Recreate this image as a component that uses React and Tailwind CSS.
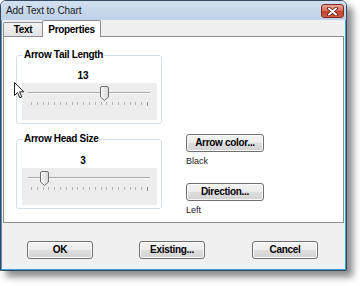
const btn =
  "flex items-center justify-center rounded-[3px] border border-[#707070] bg-[linear-gradient(#f4f4f4_0%,#ececec_50%,#dedede_50%,#d2d2d2_100%)] shadow-[inset_0_0_0_1px_#fbfbfb] text-[10px] font-bold tracking-[-0.3px] leading-none text-black";

const Slider = ({ thumbX }) => {
  const ticks = [];
  for (let i = 0; i <= 20; i++) ticks.push(9 + i * 5.8);

  return (
    <svg width="135" height="37" className="block ml-[5px] bg-[#ededed]">
      <line x1="6" y1="9.5" x2="128" y2="9.5" stroke="#a9a9a9" />
      <line x1="6" y1="10.5" x2="128" y2="10.5" stroke="#f8f8f8" />
      {ticks.map((x, i) => (
        <line
          key={i}
          x1={Math.round(x) + 0.5}
          y1="19"
          x2={Math.round(x) + 0.5}
          y2={i === 20 ? 23 : 22}
          stroke={i === 20 ? "#8a8a8a" : "#b2b2b2"}
        />
      ))}
      <defs>
        <linearGradient id="thumb" x1="0" y1="0" x2="1" y2="0">
          <stop offset="0" stopColor="#fafafa" />
          <stop offset="1" stopColor="#d6d6d6" />
        </linearGradient>
      </defs>
      <path
        transform={`translate(${thumbX} 3)`}
        d="M0.5 2 Q0.5 0.5 2 0.5 L7 0.5 Q8.5 0.5 8.5 2 L8.5 11 L4.5 14.5 L0.5 11 Z"
        fill="url(#thumb)"
        stroke="#6f6f6f"
      />
    </svg>
  );
};

const Group = ({ title, value, thumbX, top, pt }) => (
  <fieldset
    className={`${top} ${pt} pb-[3px] border border-[#d5dfe5] rounded-[3px] w-[146px]`}
  >
    <legend className="ml-[6px] px-[1px] leading-[12px] text-[10px] font-bold tracking-[-0.3px]">
      {title}
    </legend>
    <div className="pr-[12px] text-center leading-[12px] text-[10px] font-bold">
      {value}
    </div>
    <div className="mt-[1px]">
      <Slider thumbX={thumbX} />
    </div>
  </fieldset>
);

export default function App() {
  return (
    <div
      className="w-[363px] h-[286px] bg-white"
      style={{ fontFamily: '"Liberation Sans", Arial, sans-serif' }}
    >
      <div className="relative w-[347px] h-[271px] flex flex-col border border-[#34495f] rounded-t-[6px] overflow-hidden shadow-[6px_6px_7px_rgba(0,0,0,0.45)]">
        {/* TITLE */}
        <div className="h-[19px] shrink-0 flex justify-between items-start bg-linear-to-b from-[#d2e0f0] to-[#bed1e8]">
          <span className="pl-[5px] pt-[4px] text-[10px] tracking-[-0.1px] leading-[12px] text-[#1b1b1b]">
            Add Text to Chart
          </span>
          <div className="mt-[3px] mr-[2px] w-[23px] h-[14px] rounded-[3px] border border-[#7a2c22] bg-[linear-gradient(#eba898_0%,#d86e5a_45%,#c5402c_55%,#cf5a45_100%)] flex items-center justify-center">
            <svg width="11" height="9" viewBox="0 0 11 9">
              <path d="M2 1.5 L9 7.5 M9 1.5 L2 7.5" stroke="#5a1a12" strokeWidth="3.6" strokeLinecap="round" />
              <path d="M2 1.5 L9 7.5 M9 1.5 L2 7.5" stroke="#ffffff" strokeWidth="2" strokeLinecap="round" />
            </svg>
          </div>
        </div>

        {/* BODY */}
        <div className="flex-1 flex flex-col bg-[#f0f0f0] border-x border-b border-l-[#5d8fb8] border-r-[#39a0d6] border-b-[#39a0d6]">
          {/* TABS */}
          <div className="h-[16px] shrink-0 flex items-end pl-[1px]">
            <div className="w-[40px] h-[14px] flex items-center justify-center border border-b-0 border-[#8c8e94] rounded-t-[2px] bg-linear-to-b from-[#f4f4f4] to-[#e3e3e3] text-[10px] font-bold tracking-[-0.3px]">
              Text
            </div>
            <div className="relative z-10 -ml-px -mb-px w-[59px] h-[17px] flex items-center justify-center border border-b-0 border-[#8c8e94] rounded-t-[2px] bg-white text-[10px] font-bold tracking-[-0.3px]">
              Properties
            </div>
          </div>

          {/* PAGE */}
          <div className="ml-[1px] w-[341px] h-[187px] shrink-0 flex border border-[#8c8e94] bg-white">
            <div className="ml-[12px] flex flex-col">
              <Group title="Arrow Tail Length" value="13" thumbX={78} top="mt-[12px]" pt="pt-[9px]" />
              <Group title="Arrow Head Size" value="3" thumbX={18} top="mt-[9px]" pt="pt-[10px]" />
            </div>

            <div className="ml-[24px] flex flex-col items-start">
              <button className={`${btn} mt-[97px] w-[78px] h-[18px]`}>
                Arrow color...
              </button>
              <span className="mt-[4px] text-[9px] leading-[11px] text-[#222]">
                Black
              </span>
              <button className={`${btn} mt-[16px] w-[78px] h-[18px]`}>
                Direction...
              </button>
              <span className="mt-[4px] text-[9px] leading-[11px] text-[#222]">
                Left
              </span>
            </div>
          </div>

          {/* FOOTER */}
          <div className="mt-[18px] ml-[25px] flex gap-[46px]">
            <button className={`${btn} w-[66px] h-[18px] border-[#3c86bf] bg-[linear-gradient(#eef6fc_0%,#e2eef8_50%,#d3e5f3_50%,#c8def0_100%)] shadow-[inset_0_0_0_1px_#a9dcf6]`}>
              OK
            </button>
            <button className={`${btn} w-[66px] h-[18px]`}>Existing...</button>
            <button className={`${btn} w-[66px] h-[18px] ml-[1px]`}>Cancel</button>
          </div>
        </div>

        {/* CURSOR */}
        <svg
          className="absolute left-[13px] top-[81px]"
          width="12"
          height="17"
          viewBox="0 0 12 17"
        >
          <path
            d="M0.5 0.5 L0.5 13.5 L3.5 10.5 L5.8 15.8 L7.8 14.9 L5.6 9.8 L9.8 9.8 Z"
            fill="#ffffff"
            stroke="#222"
            strokeLinejoin="round"
          />
        </svg>
      </div>
    </div>
  );
}
